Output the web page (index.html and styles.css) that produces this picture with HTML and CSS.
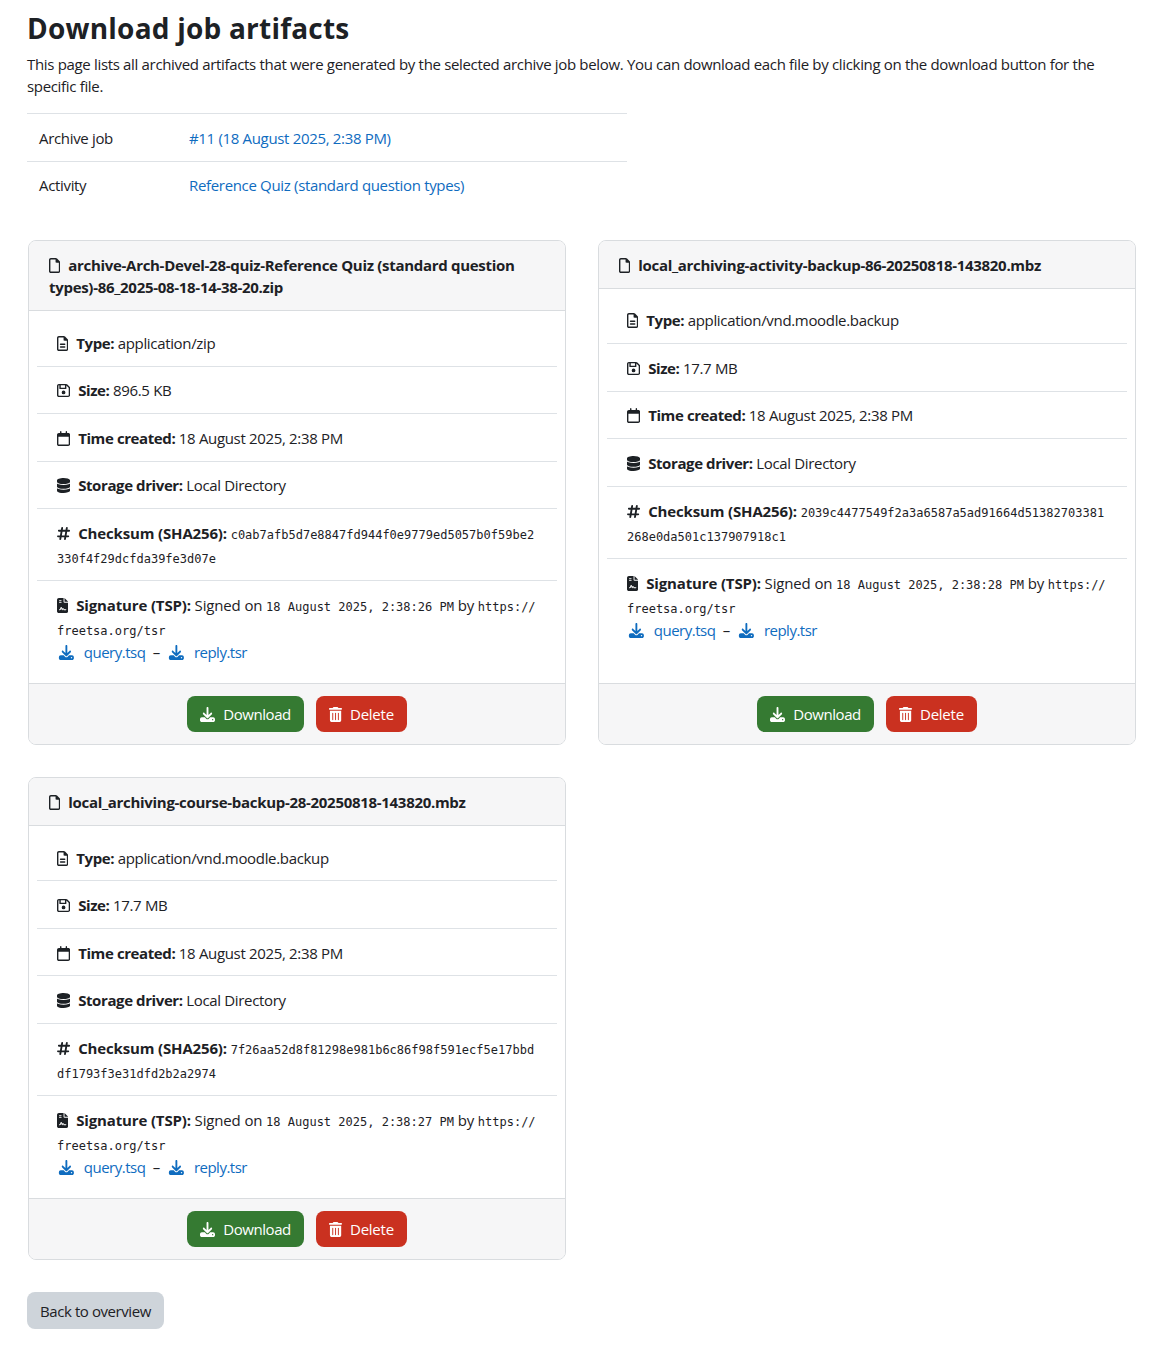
FILE: index.html
```html
<!DOCTYPE html>
<html lang="en">
<head>
    <meta charset="UTF-8">
    <title>Download job artifacts</title>
    <link rel="stylesheet" href="styles.css">
</head>
<body>
    <!-- Icon set -->
    <svg class="icon-defs" xmlns="http://www.w3.org/2000/svg">
        <symbol id="i-file" viewBox="0 0 384 512"><path d="M320 464c8.800 0 16-7.200 16-16V160H256c-17.700 0-32-14.300-32-32V48H64c-8.800 0-16 7.200-16 16V448c0 8.800 7.200 16 16 16H320zM0 64C0 28.700 28.700 0 64 0H229.500c17 0 33.300 6.700 45.300 18.700l90.500 90.500c12 12 18.700 28.300 18.700 45.300V448c0 35.300-28.700 64-64 64H64c-35.300 0-64-28.700-64-64V64z"/></symbol>
        <symbol id="i-lines" viewBox="0 0 384 512"><path d="M320 464c8.800 0 16-7.200 16-16V160H256c-17.700 0-32-14.300-32-32V48H64c-8.800 0-16 7.200-16 16V448c0 8.800 7.200 16 16 16H320zM0 64C0 28.700 28.700 0 64 0H229.500c17 0 33.300 6.700 45.300 18.700l90.500 90.500c12 12 18.700 28.300 18.700 45.300V448c0 35.300-28.700 64-64 64H64c-35.300 0-64-28.700-64-64V64z"/><path d="M120 256c-13.300 0-24 10.700-24 24s10.700 24 24 24H264c13.300 0 24-10.700 24-24s-10.700-24-24-24H120zm0 96c-13.300 0-24 10.700-24 24s10.700 24 24 24H264c13.300 0 24-10.700 24-24s-10.700-24-24-24H120z"/></symbol>
        <symbol id="i-floppy" viewBox="0 0 448 512"><path d="M48 96V416c0 8.800 7.200 16 16 16H384c8.800 0 16-7.200 16-16V170.500c0-4.200-1.700-8.300-4.700-11.300l33.900-33.900c12 12 18.700 28.300 18.700 45.300V416c0 35.300-28.700 64-64 64H64c-35.300 0-64-28.700-64-64V96C0 60.700 28.700 32 64 32H309.500c17 0 33.300 6.700 45.300 18.700l74.500 74.500-33.900 33.900L320.800 84.700c-.3-.3-.5-.5-.8-.8V184c0 13.300-10.700 24-24 24H104c-13.300 0-24-10.700-24-24V80H64c-8.800 0-16 7.200-16 16zm80-16v80H272V80H128zm32 240a64 64 0 1 1 128 0 64 64 0 1 1 -128 0z"/></symbol>
        <symbol id="i-calendar" viewBox="0 0 448 512"><path d="M152 24c0-13.300-10.700-24-24-24s-24 10.700-24 24V64H64C28.700 64 0 92.700 0 128v16 48V448c0 35.300 28.700 64 64 64H384c35.300 0 64-28.700 64-64V192 144 128c0-35.300-28.700-64-64-64H344V24c0-13.300-10.700-24-24-24s-24 10.700-24 24V64H152V24zM48 192H400V448c0 8.800-7.200 16-16 16H64c-8.800 0-16-7.200-16-16V192z"/></symbol>
        <symbol id="i-database" viewBox="0 0 448 512"><path d="M448 80v48c0 44.200-100.300 80-224 80S0 172.200 0 128V80C0 35.800 100.300 0 224 0S448 35.800 448 80zM393.200 214.700c20.800-7.400 39.900-16.900 54.800-28.600V288c0 44.200-100.300 80-224 80S0 332.200 0 288V186.100c14.900 11.800 34 21.200 54.800 28.600C99.700 230.700 159.500 240 224 240s124.300-9.300 169.200-25.300zM0 346.100c14.900 11.800 34 21.200 54.800 28.600C99.700 390.700 159.500 400 224 400s124.300-9.300 169.200-25.300c20.800-7.400 39.900-16.900 54.800-28.600V432c0 44.200-100.300 80-224 80S0 476.200 0 432V346.100z"/></symbol>
        <symbol id="i-hash" viewBox="0 0 448 512"><path d="M181.300 32.400c17.400 2.900 29.200 19.400 26.300 36.800L197.800 128h95.100l11.500-69.300c2.900-17.400 19.400-29.200 36.800-26.300s29.200 19.400 26.300 36.800L357.800 128H416c17.700 0 32 14.300 32 32s-14.300 32-32 32H347.100L325.800 320H384c17.700 0 32 14.300 32 32s-14.300 32-32 32H315.100l-11.500 69.300c-2.900 17.400-19.400 29.200-36.800 26.300s-29.200-19.400-26.300-36.800l9.800-58.700H155.100l-11.500 69.300c-2.900 17.400-19.400 29.200-36.800 26.300s-29.200-19.400-26.300-36.800L90.200 384H32c-17.700 0-32-14.300-32-32s14.300-32 32-32h68.900l21.300-128H64c-17.700 0-32-14.300-32-32s14.300-32 32-32h68.900l11.500-69.300c2.900-17.400 19.400-29.200 36.800-26.300zM187.100 192L165.800 320h95.100l21.300-128H187.100z"/></symbol>
        <symbol id="i-contract" viewBox="0 0 384 512"><path d="M64 0C28.700 0 0 28.700 0 64V448c0 35.300 28.700 64 64 64H320c35.300 0 64-28.700 64-64V160H256c-17.700 0-32-14.300-32-32V0H64zM256 0V128H384L256 0zM80 64h64c8.800 0 16 7.200 16 16s-7.200 16-16 16H80c-8.800 0-16-7.200-16-16s7.200-16 16-16zm0 64h64c8.800 0 16 7.200 16 16s-7.200 16-16 16H80c-8.800 0-16-7.200-16-16s7.200-16 16-16zm54.200 253.800c-6.100 20.300-24.800 34.200-46 34.200H80c-8.800 0-16-7.200-16-16s7.200-16 16-16h8.200c7.100 0 13.300-4.600 15.300-11.400l14.900-49.500c3.400-11.300 13.800-19.100 25.600-19.100s22.200 7.700 25.600 19.100l11.600 38.600c7.400-6.200 16.800-9.700 26.800-9.700c15.900 0 30.400 9 37.500 23.200l4.400 8.800H304c8.800 0 16 7.200 16 16s-7.200 16-16 16H240c-6.100 0-11.600-3.400-14.300-8.800l-8.800-17.700c-1.700-3.400-5.100-5.500-8.800-5.500s-7.200 2.100-8.800 5.500l-8.800 17.700c-2.900 5.900-9.200 9.400-15.700 8.800s-12.100-5.100-13.900-11.300L144 349l-9.800 32.800z"/></symbol>
        <symbol id="i-download" viewBox="0 0 512 512"><path d="M288 32c0-17.700-14.300-32-32-32s-32 14.300-32 32V274.700l-73.400-73.400c-12.500-12.500-32.800-12.500-45.300 0s-12.500 32.800 0 45.300l128 128c12.500 12.500 32.800 12.500 45.300 0l128-128c12.500-12.500 12.500-32.800 0-45.300s-32.800-12.500-45.300 0L288 274.700V32zM64 352c-35.300 0-64 28.700-64 64v32c0 35.300 28.700 64 64 64H448c35.300 0 64-28.700 64-64V416c0-35.300-28.700-64-64-64H346.500l-45.300 45.300c-25 25-65.500 25-90.500 0L165.500 352H64zm368 56a24 24 0 1 1 0 48 24 24 0 1 1 0-48z"/></symbol>
        <symbol id="i-trash" viewBox="0 0 448 512"><path d="M135.200 17.700C140.600 6.800 151.700 0 163.800 0H284.200c12.100 0 23.200 6.800 28.600 17.700L320 32h96c17.700 0 32 14.300 32 32s-14.300 32-32 32H32C14.300 96 0 81.700 0 64S14.300 32 32 32h96l7.200-14.300zM32 128H416V448c0 35.300-28.700 64-64 64H96c-35.300 0-64-28.700-64-64V128zm96 64c-8.800 0-16 7.200-16 16V432c0 8.800 7.200 16 16 16s16-7.200 16-16V208c0-8.800-7.200-16-16-16zm96 0c-8.800 0-16 7.200-16 16V432c0 8.800 7.200 16 16 16s16-7.200 16-16V208c0-8.800-7.200-16-16-16zm96 0c-8.800 0-16 7.200-16 16V432c0 8.800 7.200 16 16 16s16-7.200 16-16V208c0-8.800-7.200-16-16-16z"/></symbol>
    </svg>

    <main class="page">
        <h2 class="page-title">Download job artifacts</h2>
        <p class="page-intro">This page lists all archived artifacts that were generated by the selected archive job below. You can download each file by clicking on the download button for the specific file.</p>

        <!-- Job summary -->
        <table class="job-table">
            <tr>
                <th>Archive job</th>
                <td><a href="#">#11 (18 August 2025, 2:38 PM)</a></td>
            </tr>
            <tr>
                <th>Activity</th>
                <td><a href="#">Reference Quiz (standard question types)</a></td>
            </tr>
        </table>

        <!-- Artifact cards -->
        <div class="cards">
            <section class="card">
                <header class="card-header"><svg class="icon w384"><use href="#i-file"/></svg>archive-Arch-Devel-28-quiz-Reference Quiz (standard question types)-86_2025-08-18-14-38-20.zip</header>
                <ul class="card-body">
                    <li class="item"><svg class="icon w384"><use href="#i-lines"/></svg><b>Type:</b> application/zip</li>
                    <li class="item"><svg class="icon w448"><use href="#i-floppy"/></svg><b>Size:</b> 896.5 KB</li>
                    <li class="item"><svg class="icon w448"><use href="#i-calendar"/></svg><b>Time created:</b> 18 August 2025, 2:38 PM</li>
                    <li class="item"><svg class="icon w448"><use href="#i-database"/></svg><b>Storage driver:</b> Local Directory</li>
                    <li class="item item-mono"><svg class="icon w448"><use href="#i-hash"/></svg><b>Checksum (SHA256):</b> <code class="hash">c0ab7afb5d7e8847fd944f0e9779ed5057b0f59be2330f4f29dcfda39fe3d07e</code></li>
                    <li class="item item-mono"><svg class="icon w384"><use href="#i-contract"/></svg><b>Signature (TSP):</b> Signed on <code>18 August 2025, 2:38:26 PM</code> by <code>https://<wbr>freetsa.org/tsr</code>
                        <div class="tsp-links"><a href="#"><svg class="icon-fw"><use href="#i-download"/></svg>query.tsq</a> <span class="dash">–</span> <a href="#"><svg class="icon-fw"><use href="#i-download"/></svg>reply.tsr</a></div>
                    </li>
                </ul>
                <footer class="card-footer">
                    <a class="btn btn-green" href="#"><svg class="icon w512"><use href="#i-download"/></svg>Download</a>
                    <a class="btn btn-red" href="#"><svg class="icon w448"><use href="#i-trash"/></svg>Delete</a>
                </footer>
            </section>

            <section class="card">
                <header class="card-header"><svg class="icon w384"><use href="#i-file"/></svg>local_archiving-activity-backup-86-20250818-143820.mbz</header>
                <ul class="card-body">
                    <li class="item"><svg class="icon w384"><use href="#i-lines"/></svg><b>Type:</b> application/vnd.moodle.backup</li>
                    <li class="item"><svg class="icon w448"><use href="#i-floppy"/></svg><b>Size:</b> 17.7 MB</li>
                    <li class="item"><svg class="icon w448"><use href="#i-calendar"/></svg><b>Time created:</b> 18 August 2025, 2:38 PM</li>
                    <li class="item"><svg class="icon w448"><use href="#i-database"/></svg><b>Storage driver:</b> Local Directory</li>
                    <li class="item item-mono"><svg class="icon w448"><use href="#i-hash"/></svg><b>Checksum (SHA256):</b> <code class="hash">2039c4477549f2a3a6587a5ad91664d51382703381268e0da501c137907918c1</code></li>
                    <li class="item item-mono"><svg class="icon w384"><use href="#i-contract"/></svg><b>Signature (TSP):</b> Signed on <code>18 August 2025, 2:38:28 PM</code> by <code>https://<wbr>freetsa.org/tsr</code>
                        <div class="tsp-links"><a href="#"><svg class="icon-fw"><use href="#i-download"/></svg>query.tsq</a> <span class="dash">–</span> <a href="#"><svg class="icon-fw"><use href="#i-download"/></svg>reply.tsr</a></div>
                    </li>
                </ul>
                <footer class="card-footer">
                    <a class="btn btn-green" href="#"><svg class="icon w512"><use href="#i-download"/></svg>Download</a>
                    <a class="btn btn-red" href="#"><svg class="icon w448"><use href="#i-trash"/></svg>Delete</a>
                </footer>
            </section>

            <section class="card">
                <header class="card-header"><svg class="icon w384"><use href="#i-file"/></svg>local_archiving-course-backup-28-20250818-143820.mbz</header>
                <ul class="card-body">
                    <li class="item"><svg class="icon w384"><use href="#i-lines"/></svg><b>Type:</b> application/vnd.moodle.backup</li>
                    <li class="item"><svg class="icon w448"><use href="#i-floppy"/></svg><b>Size:</b> 17.7 MB</li>
                    <li class="item"><svg class="icon w448"><use href="#i-calendar"/></svg><b>Time created:</b> 18 August 2025, 2:38 PM</li>
                    <li class="item"><svg class="icon w448"><use href="#i-database"/></svg><b>Storage driver:</b> Local Directory</li>
                    <li class="item item-mono"><svg class="icon w448"><use href="#i-hash"/></svg><b>Checksum (SHA256):</b> <code class="hash">7f26aa52d8f81298e981b6c86f98f591ecf5e17bbddf1793f3e31dfd2b2a2974</code></li>
                    <li class="item item-mono"><svg class="icon w384"><use href="#i-contract"/></svg><b>Signature (TSP):</b> Signed on <code>18 August 2025, 2:38:27 PM</code> by <code>https://<wbr>freetsa.org/tsr</code>
                        <div class="tsp-links"><a href="#"><svg class="icon-fw"><use href="#i-download"/></svg>query.tsq</a> <span class="dash">–</span> <a href="#"><svg class="icon-fw"><use href="#i-download"/></svg>reply.tsr</a></div>
                    </li>
                </ul>
                <footer class="card-footer">
                    <a class="btn btn-green" href="#"><svg class="icon w512"><use href="#i-download"/></svg>Download</a>
                    <a class="btn btn-red" href="#"><svg class="icon w448"><use href="#i-trash"/></svg>Delete</a>
                </footer>
            </section>
        </div>

        <a class="btn btn-back" href="#">Back to overview</a>
    </main>
</body>
</html>
```

FILE: styles.css
```css
* {
    margin: 0;
    padding: 0;
    box-sizing: border-box;
}

body {
    font-family: "Open Sans", "Noto Sans", sans-serif;
    font-size: 15px;
    line-height: 22.5px;
    letter-spacing: -0.33px;
    color: #1d2125;
    background: #fff;
}

a {
    color: #0f6cbf;
    text-decoration: none;
}

b {
    font-weight: 700;
    letter-spacing: -0.4px;
}

.icon-defs {
    display: none;
}

.page {
    padding: 10px 21px 18px 27px;
}

.page-title {
    font-size: 28px;
    line-height: 36px;
    font-weight: 700;
    letter-spacing: 0.22px;
    margin-bottom: 7px;
}

.page-intro {
    line-height: 22px;
    margin-bottom: 16px;
}

/* Job summary table */
.job-table {
    width: 600px;
    border-collapse: collapse;
    margin-bottom: 32px;
}

.job-table th,
.job-table td {
    padding: 12px;
    font-weight: 400;
    text-align: left;
    border-top: 1px solid #dee2e6;
}

.job-table tr:first-child th,
.job-table tr:first-child td {
    padding: 13px 12px 11px;
}

.job-table th {
    width: 150px;
}

/* Cards */
.cards {
    display: grid;
    grid-template-columns: 1fr 1fr;
    gap: 32px;
    padding: 0 1px;
    margin-bottom: 32px;
}

.card {
    display: flex;
    flex-direction: column;
    border: 1px solid #d9dcdf;
    border-radius: 8px;
    overflow: hidden;
}

.card-header {
    padding: 12.75px 20px 11.25px;
    font-weight: 700;
    letter-spacing: -0.3px;
    background: #f6f6f7;
    border-bottom: 1px solid #d9dcdf;
}

.card-body {
    flex: 1;
    padding: 8px;
    list-style: none;
}

.item {
    padding: 12.75px 20px 11.25px;
    border-bottom: 1px solid #dee2e6;
}

.item:last-child {
    border-bottom: none;
}

.item-mono {
    padding: 12px 20px 11px;
    line-height: 24px;
    letter-spacing: -0.15px;
}

.item-mono b {
    letter-spacing: -0.15px;
}

.item-mono:last-child {
    padding-bottom: 11.3px;
}

code {
    font-family: "DejaVu Sans Mono", "Liberation Mono", monospace;
    font-size: 12px;
    line-height: 1;
    letter-spacing: 0;
}

.hash {
    word-break: break-all;
}

.tsp-links {
    line-height: 22.5px;
    letter-spacing: -0.5px;
}

.dash {
    margin: 0 4px;
}

.icon {
    display: inline-block;
    height: 15px;
    margin-right: 8px;
    vertical-align: -2px;
    fill: currentColor;
}

.w384 {
    width: 11.25px;
}

.w448 {
    width: 13.13px;
}

.w512 {
    width: 15px;
}

.icon-fw {
    display: inline-block;
    width: 18.75px;
    height: 15px;
    margin-right: 8px;
    vertical-align: -2px;
    fill: currentColor;
}

/* Buttons */
.card-footer {
    display: flex;
    justify-content: center;
    gap: 12px;
    padding: 12px;
    background: #f6f6f7;
    border-top: 1px solid #d9dcdf;
}

.btn {
    display: inline-block;
    padding: 6.5px 12px 5.5px;
    border: 1px solid transparent;
    border-radius: 8px;
    letter-spacing: -0.42px;
}

.btn-green {
    color: #fff;
    background: #357a32;
}

.btn-red {
    color: #fff;
    background: #ca3120;
    letter-spacing: -0.25px;
}

.btn-back {
    color: #1d2125;
    background: #ced4da;
}
```
